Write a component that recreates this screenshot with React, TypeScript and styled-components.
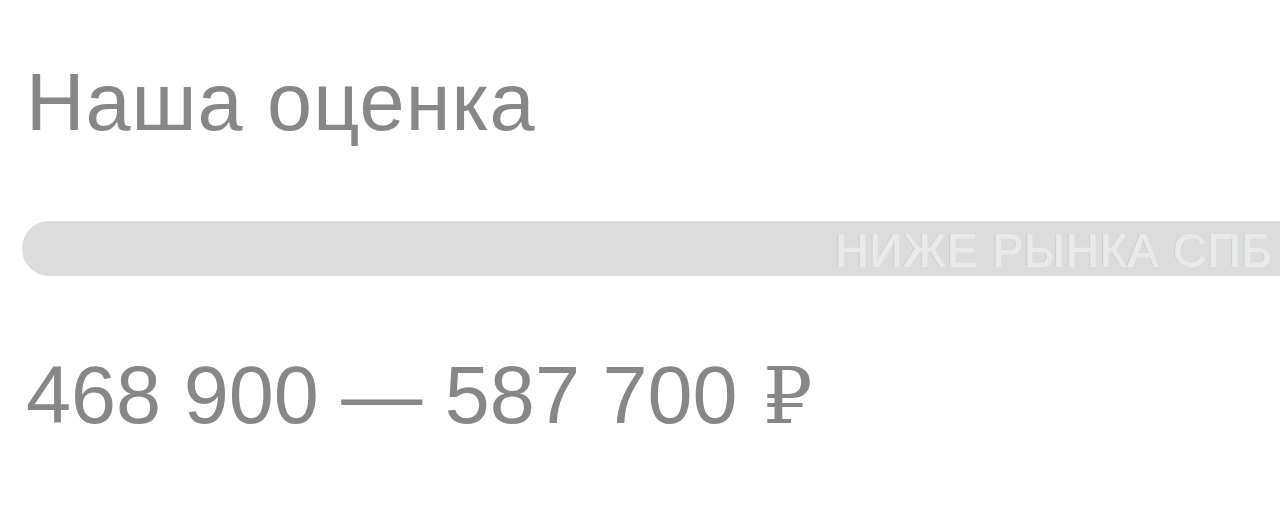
import * as React from "react";
import styled, { createGlobalStyle } from "styled-components";

const GlobalStyle = createGlobalStyle`
  html, body {
    margin: 0;
    padding: 0;
    background: #fff;
  }
  body {
    font-family: "Liberation Sans", Arial, sans-serif;
  }
`;

const Card = styled.section`
  width: 1280px;
  height: 510px;
  box-sizing: border-box;
  padding: 62px 0 0 22px;
  overflow: hidden;
  display: flex;
  flex-direction: column;
`;

const Title = styled.h2`
  margin: 0 0 78px 4px;
  font-size: 81px;
  line-height: 81px;
  font-weight: 400;
  letter-spacing: 1px;
  color: #878787;
`;

const Meter = styled.div`
  height: 55px;
  box-sizing: border-box;
  margin-right: -40px;
  padding: 6px 48px 0 0;
  border-radius: 28px 0 0 28px;
  background: #dcdcdc;
  display: flex;
  justify-content: flex-end;
  overflow: hidden;
`;

const MeterLabel = styled.span`
  font-size: 46px;
  line-height: 46px;
  letter-spacing: 1px;
  text-transform: uppercase;
  white-space: nowrap;
  color: #e9e9e9;
  text-shadow: -1px 0 0 rgba(0, 0, 0, 0.1), 1px 1px 0 rgba(255, 255, 255, 0.5);
`;

const Price = styled.div`
  margin: 79px 0 0 4px;
  font-size: 81px;
  line-height: 81px;
  color: #878787;
  white-space: nowrap;
`;

const Currency = styled.span`
  font-family: "DejaVu Serif", "Liberation Serif", serif;
  font-size: 78px;
  margin-left: 3px;
`;

export default function App() {
  return (
    <>
      <GlobalStyle />
      <Card>
        <Title>Наша оценка</Title>
        <Meter>
          <MeterLabel>Ниже рынка СПб</MeterLabel>
        </Meter>
        <Price>
          468 900 — 587 700 <Currency>₽</Currency>
        </Price>
      </Card>
    </>
  );
}
